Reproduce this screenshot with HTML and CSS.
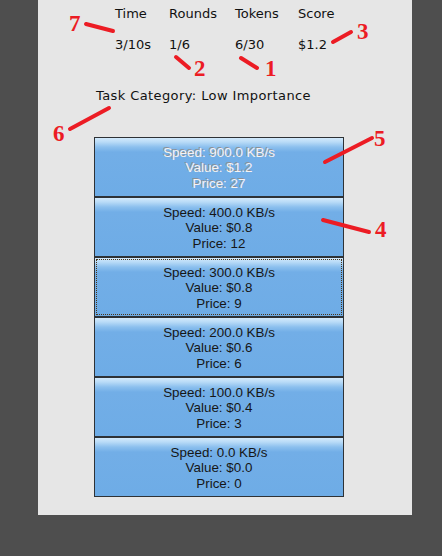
FILE: index.html
```html
<!DOCTYPE html>
<html>
<head>
<meta charset="utf-8">
<link rel="stylesheet" href="styles.css">
</head>
<body>
<div class="panel">
  <div class="stats">
    <div class="cell c1">Time</div>
    <div class="cell c2">Rounds</div>
    <div class="cell c3">Tokens</div>
    <div class="cell c4">Score</div>
    <div class="cell c1 val">3/10s</div>
    <div class="cell c2 val">1/6</div>
    <div class="cell c3 val">6/30</div>
    <div class="cell c4 val">$1.2</div>
  </div>
  <div class="category">Task Category: Low Importance</div>
  <div class="options">
    <button class="opt disabled">Speed: 900.0 KB/s<br>Value: $1.2<br>Price: 27</button>
    <button class="opt">Speed: 400.0 KB/s<br>Value: $0.8<br>Price: 12</button>
    <button class="opt focused">Speed: 300.0 KB/s<br>Value: $0.8<br>Price: 9</button>
    <button class="opt">Speed: 200.0 KB/s<br>Value: $0.6<br>Price: 6</button>
    <button class="opt">Speed: 100.0 KB/s<br>Value: $0.4<br>Price: 3</button>
    <button class="opt">Speed: 0.0 KB/s<br>Value: $0.0<br>Price: 0</button>
  </div>
</div>
<svg class="notes" width="442" height="556" viewBox="0 0 442 556">
  <g class="strokes">
    <line x1="86" y1="24" x2="113" y2="31"/>
    <line x1="176" y1="57" x2="189" y2="68"/>
    <line x1="241" y1="58" x2="257" y2="68"/>
    <line x1="333" y1="42" x2="351" y2="32"/>
    <line x1="70" y1="129" x2="109" y2="108"/>
    <line x1="325" y1="162" x2="372" y2="138"/>
    <line x1="323" y1="220" x2="369" y2="232"/>
  </g>
  <g class="nums">
    <text x="69" y="31">7</text>
    <text x="194" y="76">2</text>
    <text x="265" y="76">1</text>
    <text x="357" y="39">3</text>
    <text x="53" y="141">6</text>
    <text x="374" y="146">5</text>
    <text x="375" y="237">4</text>
  </g>
</svg>
</body>
</html>
```

FILE: styles.css
```css
html, body {
  margin: 0;
  padding: 0;
}
body {
  background: #4e4e4e;
  width: 442px;
  height: 556px;
  position: relative;
  overflow: hidden;
}
.panel {
  margin-left: 38px;
  width: 374px;
  height: 515px;
  box-sizing: border-box;
  background: #e6e6e6;
  padding: 6px 0 0 0;
  font-family: "DejaVu Sans", Verdana, sans-serif;
  font-size: 13px;
  line-height: 16px;
  color: #111;
}
.stats {
  display: grid;
  grid-template-columns: 54px 66px 63px auto;
  row-gap: 15px;
  padding-left: 77px;
}
.category {
  margin-top: 35px;
  padding-left: 58px;
  letter-spacing: 0.4px;
}
.options {
  margin-top: 33px;
  margin-left: 56px;
  width: 250px;
  display: flex;
  flex-direction: column;
}
.opt {
  display: block;
  width: 250px;
  height: 60px;
  margin: 0;
  padding: 2px 0 0 0;
  border: 1px solid #2e3236;
  background: linear-gradient(to bottom, #d2e9fc 0px, #b9dbf7 4px, #8cc0ee 9px, #72aee7 14px, #6eace6 100%);
  font-family: "Liberation Sans", Arial, sans-serif;
  font-size: 13.4px;
  line-height: 15.5px;
  color: #161616;
  text-align: center;
}
.opt.disabled {
  color: #f4f4f4;
  text-shadow: -1px -1px 0 #8c9096;
}
.opt.focused {
  outline: 1px dotted #4a3418;
  outline-offset: -3px;
}
.notes {
  position: absolute;
  top: 0;
  left: 0;
  pointer-events: none;
}
.strokes line {
  stroke: #ec1c24;
  stroke-width: 4;
  stroke-linecap: round;
}
.nums text {
  fill: #ec1c24;
  font-family: "Liberation Serif", "Times New Roman", serif;
  font-weight: bold;
  font-size: 23px;
}
```
